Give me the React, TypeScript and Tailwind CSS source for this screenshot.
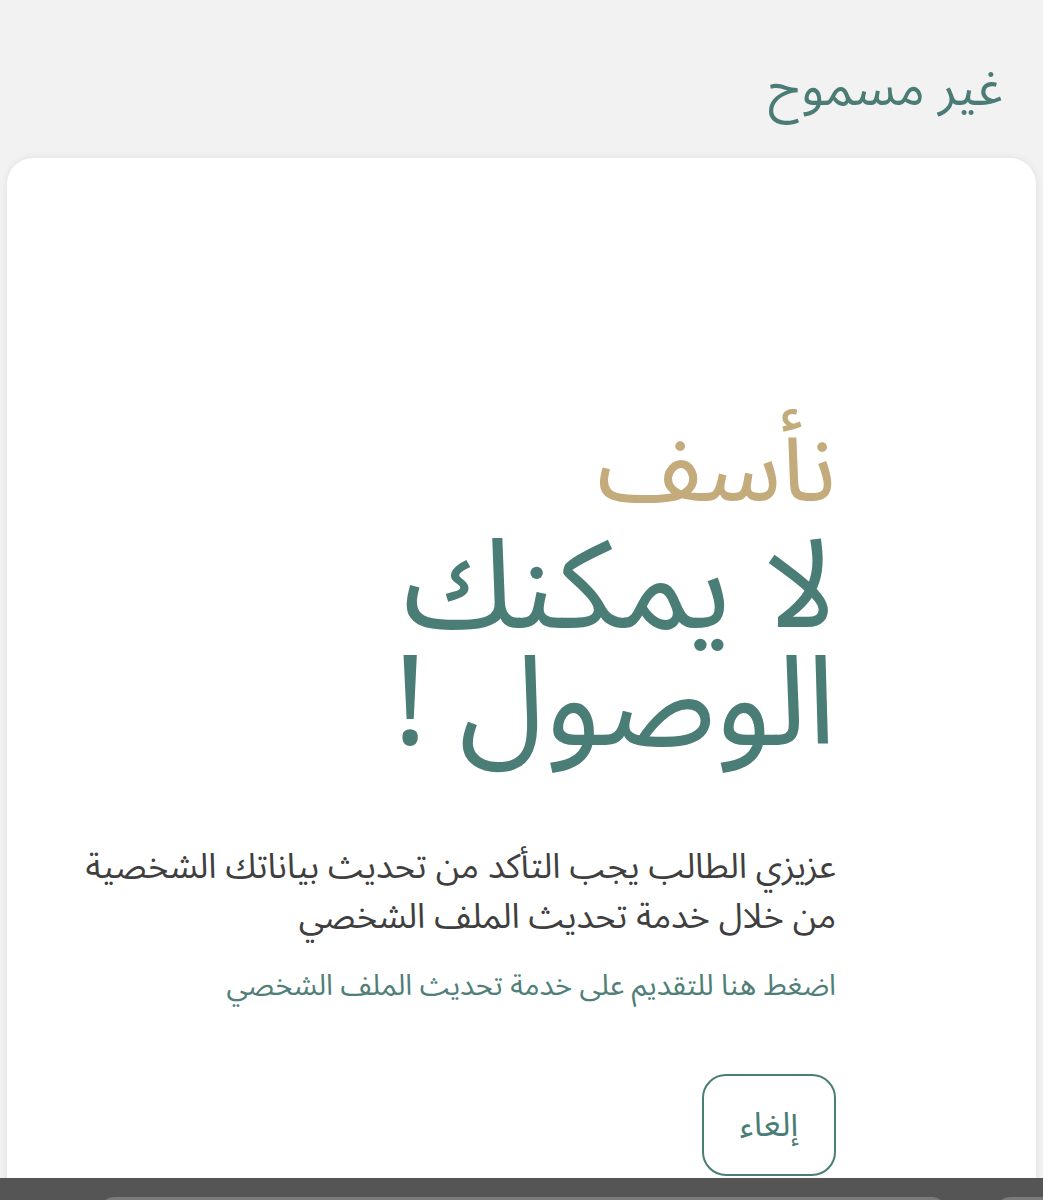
export default function App() {
  return (
    <div
      dir="rtl"
      className="relative h-[1200px] w-full overflow-hidden bg-[#f2f2f2]"
      style={{ fontFamily: '"Noto Sans Arabic", "DejaVu Sans", sans-serif' }}
    >
      <header className="flex h-[158px] items-center pr-[40px] pt-[20px]">
        <h1 className="text-[51px] font-normal leading-none text-[#4a7b75]">غير مسموح</h1>
      </header>

      <main className="mx-[7px] h-[1040px] rounded-t-[26px] bg-white pr-[200px] pt-[262px] shadow-[0_0_8px_rgba(0,0,0,0.08)]">
        <div className="flex flex-col items-start">
          <p className="text-[98px] leading-[100px] text-[#c3ab7b]">نأسف</p>
          <h2 className="mt-[10px] text-[124px] leading-[117px] text-[#4b7d77]">
            لا يمكنك
            <br />
            الوصول !
          </h2>
          <p className="mt-[78px] text-[34.5px] leading-[50px] text-[#3f3f3f]">
            عزيزي الطالب يجب التأكد من تحديث بياناتك الشخصية
            <br />
            من خلال خدمة تحديث الملف الشخصي
          </p>
          <a href="#" className="mt-[24px] text-[29px] leading-[40px] text-[#4f7f78]">
            اضغط هنا للتقديم على خدمة تحديث الملف الشخصي
          </a>
          <button className="mt-[68px] flex h-[102px] w-[134px] items-center justify-center rounded-[24px] border-2 border-[#4b7d77] bg-white text-[34px] text-[#4b7d77]">
            إلغاء
          </button>
        </div>
      </main>

      <div className="absolute bottom-0 left-0 right-0 h-[22px] bg-[#555555]">
        <div className="absolute left-[100px] top-[19px] h-[20px] w-[846px] rounded-t-[14px] bg-[#7a7a7a]" />
        <div className="absolute left-[996px] top-[19px] h-[20px] w-[60px] rounded-t-[14px] bg-[#7a7a7a]" />
      </div>
    </div>
  );
}
